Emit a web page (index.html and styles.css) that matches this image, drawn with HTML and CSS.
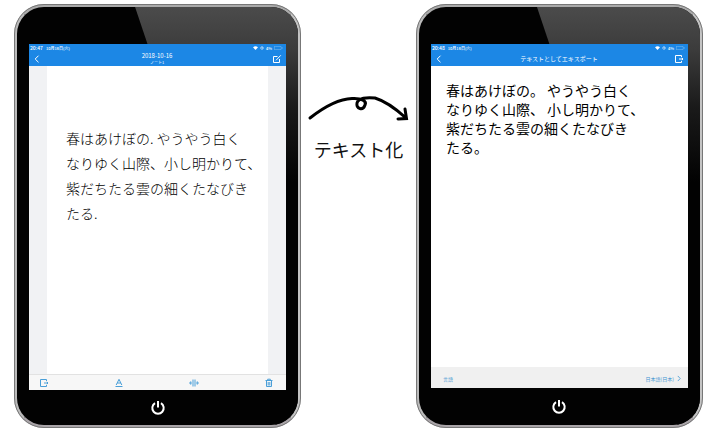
FILE: index.html
```html
<!DOCTYPE html>
<html lang="ja">
<head>
<meta charset="utf-8">
<title>テキスト化</title>
<link rel="stylesheet" href="styles.css">
</head>
<body>
<main class="stage">
  <section class="tablet">
    <div class="screen">
      <header class="bar">
        <div class="status">
          <span class="clock">20:47</span><span class="date">10月16日(火)</span>
          <span class="power">
            <svg class="wifi" viewBox="0 0 10 8"><path d="M0 2.5Q5-2 10 2.5L5 8Z"/></svg>
            <svg class="lock" viewBox="0 0 8 8"><circle cx="4" cy="4" r="2.7"/><path d="M4 2v2.3h1.5"/></svg>
            <span>4%</span>
            <svg class="battery" viewBox="0 0 18 8"><rect x=".5" y=".5" width="14" height="7" rx="2"/><path d="M17 3v2"/></svg>
          </span>
        </div>
        <nav class="nav">
          <button class="icon" aria-label="戻る"><svg viewBox="0 0 10 10"><path d="M6.5 1.7 3.2 5l3.3 3.3"/></svg></button>
          <h1 class="title">2018-10-16<small>ノート1</small></h1>
          <button class="icon" aria-label="編集"><svg viewBox="0 0 10 10"><path d="M5.5 2.5h-4v6h6V5M4 6.3 8.8 1.3"/></svg></button>
        </nav>
      </header>
      <div class="note">
        <p class="ink">春はあけぼの. やうやう白く<br>なりゆく山際、小し明かりて、<br>紫だちたる雲の細くたなびき<br>たる.</p>
      </div>
      <footer class="tools">
        <button class="icon" aria-label="書き出し"><svg viewBox="0 0 10 10"><path d="M7.5 3V1.5h-6v7h6V7M5 5h4M7.8 3.8 9 5 7.8 6.2"/></svg></button>
        <button class="icon" aria-label="文字"><svg viewBox="0 0 10 10"><path d="M2.2 7 5 1.3 7.8 7M3.2 5h3.6M1.5 8.5h7"/></svg></button>
        <button class="icon" aria-label="間隔"><svg viewBox="0 0 10 10"><path d="M4 1.5v7M6 1.5v7M2 3.700.5 5 2 6.300zM8 3.700 9.500 5 8 6.300z"/></svg></button>
        <button class="icon" aria-label="削除"><svg viewBox="0 0 10 10"><path d="M1.5 2.5h7M2.5 2.5v6h5v-6M3.7 2.5V1.2h2.6v1.3M4.2 4v3.5M5.8 4v3.5"/></svg></button>
      </footer>
    </div>
    <button class="home" aria-label="電源"><svg viewBox="0 0 16 16"><path d="M5 3.2a5.7 5.7 0 1 0 6 0M8 1v6.5"/></svg></button>
  </section>

  <div class="convert">
    <svg class="arrow" viewBox="0 0 102 28"><path d="M3 24C17 13 31 5 45 4.500C55 4 60 7 58 11C56 17 49 15 50 9C51 4 60 3 68 4C78 7 88 14 99 24M98 15l1.500 9.500-8.500.5"/></svg>
    <p class="caption">テキスト化</p>
  </div>

  <section class="tablet tablet-export">
    <div class="screen">
      <header class="bar">
        <div class="status">
          <span class="clock">20:48</span><span class="date">10月16日(火)</span>
          <span class="power">
            <svg class="wifi" viewBox="0 0 10 8"><path d="M0 2.5Q5-2 10 2.5L5 8Z"/></svg>
            <svg class="lock" viewBox="0 0 8 8"><circle cx="4" cy="4" r="2.7"/><path d="M4 2v2.3h1.5"/></svg>
            <span>4%</span>
            <svg class="battery" viewBox="0 0 18 8"><rect x=".5" y=".5" width="14" height="7" rx="2"/><path d="M17 3v2"/></svg>
          </span>
        </div>
        <nav class="nav">
          <button class="icon" aria-label="戻る"><svg viewBox="0 0 10 10"><path d="M6.5 1.7 3.2 5l3.3 3.3"/></svg></button>
          <h1 class="title">テキストとしてエキスポート</h1>
          <button class="icon" aria-label="書き出し"><svg viewBox="0 0 10 10"><path d="M7.5 3V1.5h-6v7h6V7M5 5h4M7.8 3.8 9 5 7.8 6.2"/></svg></button>
        </nav>
      </header>
      <p class="result">春はあけぼの。 やうやう白く<br>なりゆく山際、 小し明かりて、<br>紫だちたる雲の細くたなびき<br>たる。</p>
      <footer class="language">
        <span>言語</span>
        <button class="choice">日本語(日本)<svg viewBox="0 0 5 8"><path d="M1 .8 4 4 1 7.2"/></svg></button>
      </footer>
    </div>
    <button class="home" aria-label="電源"><svg viewBox="0 0 16 16"><path d="M5 3.2a5.7 5.7 0 1 0 6 0M8 1v6.5"/></svg></button>
  </section>
</main>
</body>
</html>
```
FILE: styles.css
```css
* { box-sizing: border-box; }

body {
  margin: 0;
  background: #fff;
  color: #111;
  font-family: "Noto Sans CJK JP", sans-serif;
}

h1, p { margin: 0; }

button {
  margin: 0;
  padding: 0;
  border: 0;
  background: none;
  color: inherit;
  font: inherit;
}

svg {
  display: block;
  fill: none;
  stroke: currentColor;
}

.stage {
  display: grid;
  grid-template-columns: 5fr 2fr 5fr;
  align-items: start;
  padding: 4px 17px 4px 14px;
}

/* Tablet body */
.tablet {
  position: relative;
  display: flex;
  flex-direction: column;
  aspect-ratio: 287 / 424;
  padding: 37px 12px 0;
  border: 3px solid #b9b9b9;
  border-color: #aaa #c4c4c4 #a9a4a8 #bbb;
  border-radius: 30px;
  outline: 1px solid #777;
  outline-offset: -1px;
  background: #020202;
}

.tablet::before {
  content: "";
  position: absolute;
  inset: 0;
  border-radius: 27px;
  background: linear-gradient(#4b4b4b, #3c3c3c 10%, #1a1a1a 24%, #020202 42%);
  clip-path: polygon(42% 0, 100% 0, 100% 100%, 92% 100%);
}

.screen {
  position: relative;
  flex: 1;
  display: flex;
  flex-direction: column;
  background: #fff;
}

.home {
  position: relative;
  flex: 0 0 35px;
  display: flex;
  align-items: center;
  justify-content: center;
  color: #fff;
}

.home svg {
  width: 16px;
  height: 16px;
  stroke-width: 2;
}

.tablet-export .home { flex-basis: 37px; }

/* Blue header */
.bar {
  padding: 1px 3px 0 1px;
  background: #1c87e5;
  color: #fff;
}

.status {
  display: flex;
  align-items: center;
  gap: 3px;
  font-size: 4px;
  font-weight: 500;
  line-height: 6px;
}

.clock { font-size: 5px; }

.power {
  display: flex;
  align-items: center;
  gap: 2px;
  margin-left: auto;
}

.wifi {
  width: 5px;
  height: 4px;
  fill: currentColor;
  stroke: none;
}

.lock {
  width: 4px;
  height: 4px;
}

.battery {
  width: 9px;
  height: 4px;
  opacity: 0.6;
}

.nav {
  display: flex;
  align-items: center;
  justify-content: space-between;
  height: 15px;
  padding: 0 1px 0 2px;
}

.title {
  font-size: 6px;
  font-weight: 400;
  line-height: 8px;
  text-align: center;
}

.title small {
  display: block;
  font-size: 4px;
  line-height: 5px;
}

.icon svg {
  width: 10px;
  height: 10px;
}

/* Handwritten note */
.note {
  flex: 1;
  padding: 60px 0 0 19px;
  border: solid #f1f2f4;
  border-width: 0 18px;
}

.ink {
  color: #000;
  font-size: 14px;
  font-weight: 300;
  line-height: 25px;
  white-space: nowrap;
}

.tools {
  display: flex;
  align-items: center;
  justify-content: space-between;
  height: 16px;
  padding: 0 12px 0 10px;
  border-top: 1px solid #e2e2e2;
  background: #f7f7f7;
  color: #4a9fd8;
}

/* Conversion arrow */
.convert {
  padding-top: 90px;
  text-align: center;
}

.arrow {
  width: 102px;
  height: 28px;
  margin: 0 auto;
  color: #000;
  stroke-width: 3;
  stroke-linecap: round;
}

.caption {
  padding-top: 12px;
  font-size: 18px;
  line-height: 30px;
}

/* Recognised text */
.result {
  flex: 1;
  padding: 15px 0 0 15px;
  color: #000;
  font-size: 14px;
  line-height: 19px;
  white-space: nowrap;
}

.language {
  display: flex;
  align-items: center;
  justify-content: space-between;
  height: 21px;
  padding: 2px 7px 0 12px;
  background: #f0f0f0;
  color: #3d94d0;
  font-size: 5px;
}

.choice {
  display: flex;
  align-items: center;
  gap: 3px;
}

.choice svg {
  width: 4px;
  height: 7px;
}
```
